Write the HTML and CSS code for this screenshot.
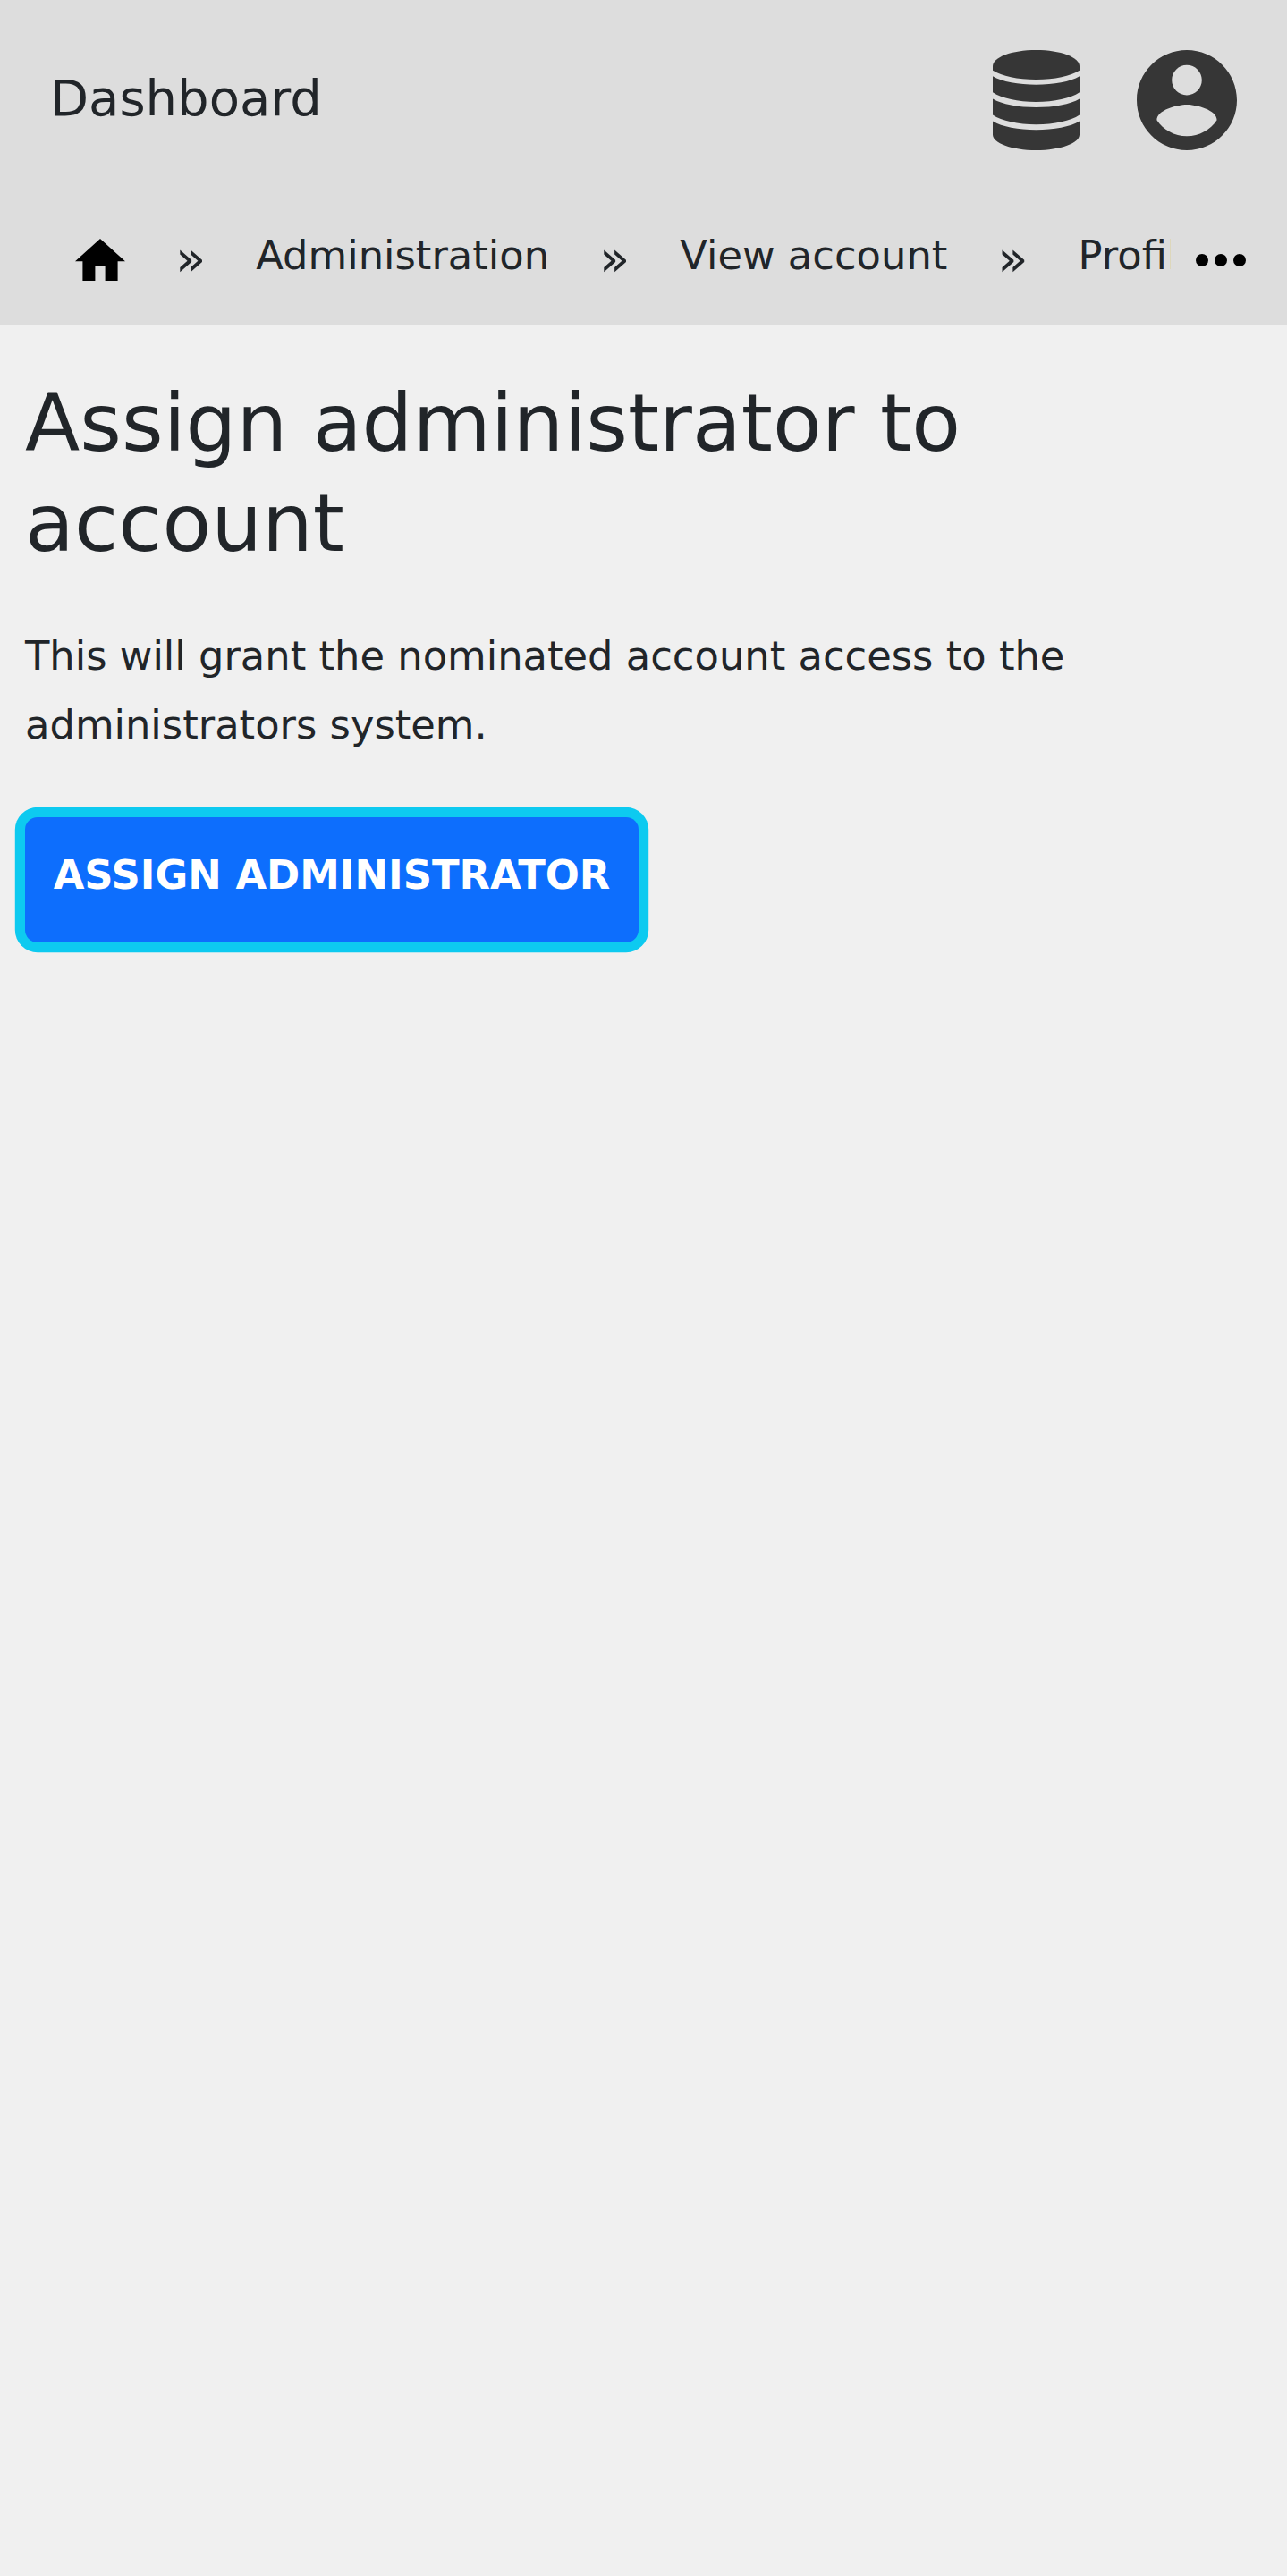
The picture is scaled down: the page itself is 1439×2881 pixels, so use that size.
FILE: index.html
```html
<!DOCTYPE html>
<html lang="en">
<head>
<meta charset="utf-8">
<title>Assign administrator to account</title>
<link rel="stylesheet" href="styles.css">
</head>
<body>
<header class="site-header">
  <div class="topbar">
    <a class="brand">Dashboard</a>
    <div class="tools">
      <svg class="icon-database" viewBox="0 0 97 112"><path d="M0 18C0 8 21 0 48.500 0S97 8 97 18v4.700C87 29 69 33 48.500 33S10 29 0 22.700z"/><path d="M0 29.300C10 35.500 29 38.700 48.500 38.700S87 35.500 97 29.300v18C87 54 69 58 48.500 58S10 54 0 47.300z"/><path d="M0 54.500C10 60.700 29 64 48.500 64S87 60.700 97 54.500v18C87 79.200 69 83.200 48.500 83.200S10 79.200 0 72.500z"/><path d="M0 79.500C10 85.700 29 89.200 48.500 89.200S87 85.700 97 79.500V94.500C97 104 76 112 48.500 112S0 104 0 94.500z"/></svg>
      <svg class="icon-account" viewBox="2 2 20 20"><path d="M12 2C6.480 2 2 6.480 2 12s4.480 10 10 10 10-4.480 10-10S17.520 2 12 2zm0 3c1.660 0 3 1.340 3 3s-1.340 3-3 3-3-1.340-3-3 1.340-3 3-3zm0 14.200c-2.500 0-4.710-1.280-6-3.220.030-1.990 4-3.080 6-3.080 1.990 0 5.970 1.090 6 3.080-1.290 1.940-3.500 3.220-6 3.220z"/></svg>
    </div>
  </div>
  <nav class="breadcrumbs">
    <div class="trail">
      <svg class="icon-home" viewBox="2 3 20 17"><path d="M10 20v-6h4v6h5v-8h3L12 3 2 12h3v8z"/></svg>
      <span class="sep">»</span>
      <a class="crumb">Administration</a>
      <span class="sep">»</span>
      <a class="crumb">View account</a>
      <span class="sep">»</span>
      <a class="crumb">Profile</a>
    </div>
    <svg class="icon-more" viewBox="0 0 20 5"><circle cx="2.500" cy="2.500" r="2.500"/><circle cx="10" cy="2.500" r="2.500"/><circle cx="17.500" cy="2.500" r="2.500"/></svg>
  </nav>
</header>
<main class="content">
  <h1 class="title">Assign administrator to account</h1>
  <p class="lead">This will grant the nominated account access to the administrators system.</p>
  <button class="submit" type="button">Assign administrator</button>
</main>
</body>
</html>
```
FILE: styles.css
```css
* { box-sizing: border-box; }
body {
  margin: 0;
  min-height: 100vh;
  background: #f0f0f0;
  color: #212529;
  font-family: "DejaVu Sans", sans-serif;
  font-size: 44.8px;
}
.site-header { background: #ddd; height: 364px; }
.topbar {
  display: flex;
  align-items: center;
  justify-content: space-between;
  height: 224px;
  padding: 0 56px;
}
.brand { font-size: 56px; line-height: 84px; margin-top: -4px; }
.tools { display: flex; gap: 64px; fill: #363636; }
.icon-database { width: 97px; height: 112px; }
.icon-account { width: 112px; height: 112px; }
.breadcrumbs {
  display: flex;
  align-items: center;
  justify-content: space-between;
  height: 140px;
  padding: 0 46px 7px 84px;
}
.trail {
  display: flex;
  align-items: center;
  gap: 56px;
  width: 1225px;
  overflow: hidden;
  white-space: nowrap;
}
.trail > * { flex: none; }
.icon-home { width: 56px; height: 47.600px; }
.sep { font-size: 56px; line-height: 84px; padding-bottom: 4px; }
.crumb { line-height: 76px; padding-bottom: 10px; }
.icon-more { width: 56px; height: 14px; }
.content { padding: 53px 28px; }
.title { margin: 0 0 55px; font-size: 89.600px; font-weight: 400; line-height: 112px; }
.lead { margin: 0 0 64.100px; line-height: 76.800px; }
.submit {
  display: block;
  width: 686px;
  height: 140px;
  padding: 0 0 10px;
  border: 0;
  border-radius: 14px;
  background: #0d6efd;
  box-shadow: 0 0 0 11.200px #0dcaf0;
  color: #fff;
  font: bold 44.800px/76px "DejaVu Sans", sans-serif;
  text-transform: uppercase;
}
```
